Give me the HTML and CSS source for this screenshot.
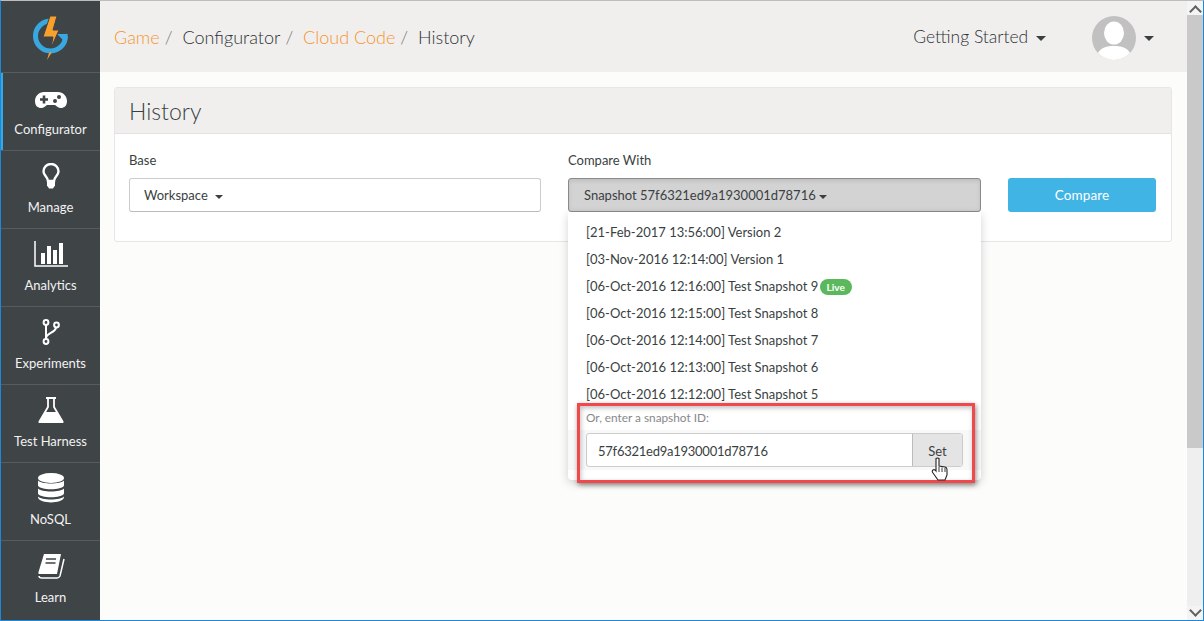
FILE: index.html
```html
<!DOCTYPE html>
<html lang="en">
<head>
    <meta charset="UTF-8">
    <title>History</title>
    <link rel="stylesheet" href="styles.css">
</head>
<body>
<div class="window">
    <nav class="sidebar">
        <div class="logo">
            <svg width="38" height="46" viewBox="0 0 38 46">
                <path d="M18 6 A15 15 0 1 0 33.500 21" fill="none" stroke="#3aa8e0" stroke-width="5"/>
                <path d="M25 19 L36 19 L33 27 Z" fill="#3aa8e0"/>
                <path d="M18 1 L25 1 L21 15 L27 15 L19 33 L21 22 L11 22 Z" fill="#f7a02c" stroke="#3f4447" stroke-width="1"/>
                <path d="M17 38 L20 37 L15 45 Z" fill="#f7a02c"/>
            </svg>
        </div>
        <a class="nav-item active">
            <svg width="32" height="26" viewBox="0 -6 32 26"><path d="M9 1h14c5 0 9 4 9 9s-3 7-6 7c-3 0-4-2-6-3h-8c-2 1-3 3-6 3s-6-2-6-7 4-9 9-9z" fill="#fff"/><path d="M5 8.500h8M9 4.500v8" stroke="#3f4447" stroke-width="2.600"/><circle cx="24" cy="6" r="2" fill="#3f4447"/><circle cx="20" cy="10" r="2" fill="#3f4447"/></svg>
            <span>Configurator</span>
        </a>
        <a class="nav-item">
            <svg width="18" height="26" viewBox="0 0 18 26"><path d="M6 18 C6 14 1.500 12.500 1.500 8.500 A7.500 7.500 0 0 1 16.500 8.500 C16.500 12.500 12 14 12 18 Z" fill="none" stroke="#fff" stroke-width="2.400"/><path d="M5 18.500h8v4l-2 3H7l-2-3z" fill="#fff"/></svg>
            <span>Manage</span>
        </a>
        <a class="nav-item">
            <svg width="34" height="26" viewBox="0 0 34 26"><path d="M1 0v25h33" fill="none" stroke="#fff" stroke-width="1.500"/><path d="M7 12h4v11H7zM13 5h4v18h-4zM19 9h4v14h-4zM25 2h4v21h-4z" fill="#fff"/></svg>
            <span>Analytics</span>
        </a>
        <a class="nav-item">
            <svg width="18" height="26" viewBox="0 0 18 26"><g fill="none" stroke="#fff" stroke-width="2"><circle cx="4" cy="3.500" r="2.400"/><circle cx="4" cy="22.500" r="2.400"/><circle cx="14.500" cy="6" r="2.400"/><path d="M4 6v14M14 8.500c-1 6-10 5-10 11"/></g></svg>
            <span>Experiments</span>
        </a>
        <a class="nav-item">
            <svg width="26" height="26" viewBox="0 0 26 26"><path d="M8 1h10M10 1v9L1.500 24.500q-.5 1 1 1h21q1.500 0 1-1L16 10V1" fill="none" stroke="#fff" stroke-width="1.800"/><path d="M7 15h12l6 10.500H1z" fill="#fff"/></svg>
            <span>Test Harness</span>
        </a>
        <a class="nav-item">
            <svg class="db" width="26" height="30" viewBox="0 0 26 30"><ellipse cx="13" cy="5" rx="13" ry="5" fill="#fff"/><path d="M0 7.500c3 4 23 4 26 0v5c-2 5-24 5-26 0zM0 15.500c3 4 23 4 26 0v5c-2 5-24 5-26 0zM0 23.500c3 4 23 4 26 0v1c-2 6.500-24 6.500-26 0z" fill="#fff"/></svg>
            <span>NoSQL</span>
        </a>
        <a class="nav-item">
            <svg width="28" height="26" viewBox="0 0 28 26"><path d="M7 1h17l-4 20H2q-1 0-.500-2z" fill="#fff"/><path d="M2 23q0 2 3 2h15q2 0 3-2l4-17" fill="none" stroke="#fff" stroke-width="1.500"/><path d="M9 6h10M8.500 10h10" stroke="#3f4447" stroke-width="1.500"/></svg>
            <span>Learn</span>
        </a>
    </nav>

    <div class="page">
        <header class="topbar">
            <div class="crumbs">
                <a class="link">Game</a><i>/</i>
                <span>Configurator</span><i>/</i>
                <a class="link">Cloud Code</a><i>/</i>
                <span>History</span>
            </div>
            <div class="topbar-right">
                <span class="started">Getting Started <b class="caret"></b></span>
                <svg class="avatar" width="44" height="44" viewBox="0 0 44 44">
                    <defs><clipPath id="round"><circle cx="22" cy="22" r="22"/></clipPath></defs>
                    <circle cx="22" cy="22" r="22" fill="#c1c1c1"/>
                    <g clip-path="url(#round)" fill="#fff"><ellipse cx="22" cy="17" rx="10" ry="11.500"/><path d="M4 44c1-12 10-14 18-14s17 2 18 14z"/></g>
                </svg>
                <b class="caret"></b>
            </div>
        </header>

        <main class="content">
            <section class="panel">
                <h2>History</h2>
                <div class="panel-body">
                    <div class="field">
                        <label>Base</label>
                        <div class="select">Workspace <b class="caret small"></b></div>
                    </div>
                    <div class="field wide">
                        <label>Compare With</label>
                        <div class="select open">Snapshot 57f6321ed9a1930001d78716 <b class="caret small"></b></div>
                        <div class="menu">
                            <ul>
                                <li>[21-Feb-2017 13:56:00] Version 2</li>
                                <li>[03-Nov-2016 12:14:00] Version 1</li>
                                <li>[06-Oct-2016 12:16:00] Test Snapshot 9 <em class="live">Live</em></li>
                                <li>[06-Oct-2016 12:15:00] Test Snapshot 8</li>
                                <li>[06-Oct-2016 12:14:00] Test Snapshot 7</li>
                                <li>[06-Oct-2016 12:13:00] Test Snapshot 6</li>
                                <li>[06-Oct-2016 12:12:00] Test Snapshot 5</li>
                            </ul>
                            <p class="hint">Or, enter a snapshot ID:</p>
                            <div class="id-row">
                                <div class="id-group">
                                    <span class="id-value">57f6321ed9a1930001d78716</span>
                                    <span class="set">Set</span>
                                </div>
                            </div>
                            <div class="highlight"></div>
                            <svg class="cursor" width="18" height="24" viewBox="0 0 18 24"><path d="M5 1.500q1.500-1 3 0V9l6 1q2 .5 2 2.500V18l-2 5H7L2 16q-1.500-2 0-3t3 1z" fill="#fff" stroke="#222" stroke-width="1.100"/><path d="M8 10v5M11 10.500V15M14 11v4" stroke="#222" stroke-width=".9"/></svg>
                        </div>
                    </div>
                    <button class="compare">Compare</button>
                </div>
            </section>
        </main>
    </div>

    <div class="scrollbar">
        <span class="arrow up"></span>
        <span class="thumb"></span>
        <span class="track"></span>
        <span class="arrow down"></span>
    </div>
</div>
</body>
</html>
```

FILE: styles.css
```css
* {
    box-sizing: border-box;
}
html, body {
    margin: 0;
    height: 100%;
    overflow: hidden;
}
body {
    font-family: 'Lato', 'Noto Sans', Arial, sans-serif;
    font-size: 13px;
    color: #3a3f42;
}
.window {
    display: flex;
    height: 621px;
    border-top: 1px solid #bdbdbd;
    border-left: 1px solid #1e88d8;
    border-right: 1px solid #1e88d8;
    border-bottom: 1px solid #1e88d8;
}

/* sidebar */
.sidebar {
    width: 99px;
    flex: none;
    background: #3f4447;
}
.logo {
    height: 71px;
    display: flex;
    align-items: center;
    justify-content: center;
    padding-top: 2px;
}
.nav-item {
    height: 78px;
    display: flex;
    flex-direction: column;
    align-items: center;
    padding: 12px 0 13px;
    border-top: 1px solid #575b5e;
    color: #f2f2f2;
    font-size: 13px;
}
.nav-item span {
    margin-top: auto;
}
.nav-item .db {
    margin-top: -2px;
}
.nav-item.active {
    box-shadow: inset 2px 0 0 #35a8e6;
}

/* header */
.page {
    flex: 1;
    display: flex;
    flex-direction: column;
    background: #fcfcfb;
}
.topbar {
    height: 71px;
    flex: none;
    background: #f0efee;
    display: flex;
    align-items: center;
    justify-content: space-between;
    padding: 3px 33px 0 14px;
    font-size: 18px;
    font-weight: 300;
    color: #2e3235;
}
.crumbs {
    margin-bottom: 3px;
}
.crumbs i {
    font-style: normal;
    color: #777;
    margin: 0 5px;
}
.link {
    color: #f6952f;
}
.topbar-right {
    display: flex;
    align-items: center;
}
.started {
    margin: 0 46px 3px 0;
    font-size: 17.500px;
}
.avatar {
    margin-right: 5px;
}
.caret {
    display: inline-block;
    width: 0;
    height: 0;
    margin-left: 3px;
    vertical-align: middle;
    border-top: 5px solid #3a3f42;
    border-left: 5px solid transparent;
    border-right: 5px solid transparent;
}
.caret.small {
    border-width: 4px 4.500px 0;
    border-left-color: transparent;
    border-right-color: transparent;
    margin-left: 4px;
}

/* panel */
.content {
    flex: 1;
    padding: 15px 15px 0 14px;
}
.panel {
    height: 155px;
    background: #fff;
    border: 1px solid #e6e6e6;
    border-radius: 3px;
}
.panel h2 {
    margin: 0;
    height: 46px;
    padding: 0 14px;
    line-height: 46px;
    font-size: 23px;
    font-weight: 300;
    background: #f0efee;
    border-bottom: 1px solid #e2e2e2;
}
.panel-body {
    display: flex;
    align-items: flex-start;
    padding: 18px 14px 0;
}
.field {
    position: relative;
    width: 412px;
    margin-right: 27px;
}
.field.wide {
    width: 413px;
}
.field label {
    display: block;
    height: 26px;
    font-size: 13px;
}
.select {
    height: 34px;
    line-height: 32px;
    padding: 0 14px;
    background: #fff;
    border: 1px solid #ccc;
    border-bottom-color: #bbb;
    border-radius: 3px;
}
.select.open {
    padding-left: 15px;
    background: #d3d3d3;
    border-color: #8a8a8a;
    box-shadow: inset 0 2px 4px rgba(0, 0, 0, 0.1);
}
.select.open .caret {
    margin-left: 0;
}
.compare {
    width: 148px;
    height: 34px;
    margin-top: 26px;
    background: #41b4e6;
    border: none;
    border-radius: 3px;
    color: #fff;
    font-family: inherit;
    font-size: 13.500px;
    letter-spacing: 0.1px;
}

/* dropdown */
.menu {
    position: absolute;
    top: 60px;
    left: 0;
    width: 413px;
    height: 268px;
    padding-top: 7px;
    background: #fff;
    border-radius: 0 0 4px 4px;
    box-shadow: 0 3px 10px rgba(0, 0, 0, 0.18);
}
.menu ul {
    list-style: none;
    margin: 0;
    padding: 0;
}
.menu li {
    height: 27px;
    line-height: 27px;
    padding: 0 18px;
    white-space: nowrap;
}
.live {
    display: inline-block;
    margin-left: -2px;
    padding: 0 7px;
    height: 16px;
    line-height: 16px;
    vertical-align: 0;
    border-radius: 8px;
    background: #5cb85c;
    color: #fff;
    font-size: 10px;
    font-style: normal;
    font-weight: 700;
}
.hint {
    margin: 0 18px;
    height: 22px;
    line-height: 20px;
    font-size: 11.800px;
    color: #888;
}
.id-row {
    height: 40px;
    padding: 3px 18px 0;
    background: #f8f8f8;
}
.id-group {
    display: flex;
    height: 34px;
    background: #fff;
    border: 1px solid #ccc;
    border-radius: 3px;
}
.id-value {
    flex: 1;
    line-height: 34px;
    padding-left: 11px;
    letter-spacing: -0.25px;
}
.set {
    width: 50px;
    line-height: 34px;
    text-align: center;
    background: #e4e4e4;
    border-left: 1px solid #bbb;
    border-radius: 0 3px 3px 0;
}
.highlight {
    position: absolute;
    left: 9px;
    top: 191px;
    width: 398px;
    height: 80px;
    border: 3px solid #f2484b;
    box-shadow: 1px 2px 5px rgba(0, 0, 0, 0.45), inset 1px 2px 5px rgba(0, 0, 0, 0.25);
}
.cursor {
    position: absolute;
    left: 363px;
    top: 245px;
}

/* scrollbar */
.scrollbar {
    width: 16px;
    flex: none;
    display: flex;
    flex-direction: column;
    background: #efefef;
}
.arrow {
    height: 14px;
    flex: none;
    position: relative;
    background: #f4f4f4;
}
.arrow::before {
    content: "";
    position: absolute;
    left: 4px;
    top: 6px;
    width: 7px;
    height: 7px;
    border-top: 2px solid #606060;
    border-left: 2px solid #606060;
    transform: rotate(45deg);
}
.arrow.down::before {
    top: 0;
    transform: rotate(225deg);
}
.thumb {
    height: 433px;
    flex: none;
    background: #c9c9c9;
}
.track {
    flex: 1;
}
```
